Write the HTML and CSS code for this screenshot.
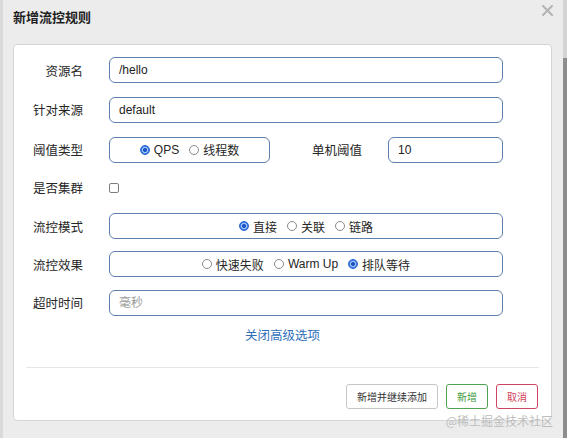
FILE: index.html
```html
<!DOCTYPE html>
<html lang="zh-CN">
<head>
<meta charset="utf-8">
<title>新增流控规则</title>
<link rel="stylesheet" href="styles.css">
</head>
<body>
<div class="page">
  <header class="header">
    <h1 class="title">新增流控规则</h1>
    <button class="close" type="button" aria-label="关闭">
      <svg width="11" height="11" viewBox="0 0 11 11"><path d="M1 1 L10 10 M10 1 L1 10" stroke="#b3b3b3" stroke-width="2" stroke-linecap="round"/></svg>
    </button>
  </header>
  <div class="card">
    <form class="form">
      <div class="row row-loose">
        <label class="label">资源名</label>
        <input class="field" type="text" value="/hello">
      </div>
      <div class="row row-loose">
        <label class="label">针对来源</label>
        <input class="field" type="text" value="default">
      </div>
      <div class="row">
        <label class="label">阈值类型</label>
        <div class="field choice box-short">
          <label class="option"><input type="radio" name="grade" checked><span>QPS</span></label>
          <label class="option"><input type="radio" name="grade"><span>线程数</span></label>
        </div>
        <label class="label label-inline">单机阈值</label>
        <input class="field field-short" type="text" value="10">
      </div>
      <div class="row">
        <label class="label">是否集群</label>
        <input class="check" type="checkbox">
      </div>
      <div class="row">
        <label class="label">流控模式</label>
        <div class="field choice">
          <label class="option"><input type="radio" name="mode" checked><span>直接</span></label>
          <label class="option"><input type="radio" name="mode"><span>关联</span></label>
          <label class="option"><input type="radio" name="mode"><span>链路</span></label>
        </div>
      </div>
      <div class="row">
        <label class="label">流控效果</label>
        <div class="field choice">
          <label class="option"><input type="radio" name="effect"><span>快速失败</span></label>
          <label class="option"><input type="radio" name="effect"><span>Warm Up</span></label>
          <label class="option"><input type="radio" name="effect" checked><span>排队等待</span></label>
        </div>
      </div>
      <div class="row">
        <label class="label">超时时间</label>
        <input class="field" type="text" placeholder="毫秒">
      </div>
    </form>
    <div class="toggle"><a href="#">关闭高级选项</a></div>
    <hr class="divider">
    <div class="footer">
      <button class="btn" type="button">新增并继续添加</button>
      <button class="btn btn-success" type="button">新增</button>
      <button class="btn btn-danger" type="button">取消</button>
    </div>
  </div>
  <div class="watermark">@稀土掘金技术社区</div>
</div>
</body>
</html>
```
FILE: styles.css
```css
* { box-sizing: border-box; }
html, body { margin: 0; }
body {
  width: 567px;
  height: 438px;
  overflow: hidden;
  font-family: "Liberation Sans", "Noto Sans CJK SC", sans-serif;
  color: #333;
  background:
    linear-gradient(#d4d4d4, #d4d4d4) right 0 top 0 / 4px 58px no-repeat,
    linear-gradient(#8d8d8d, #8d8d8d) right 0 top 58px / 4px 380px no-repeat,
    linear-gradient(to right, #dadada 0 3px, #ececec 3px);
}
.page { position: relative; height: 438px; }

.header {
  display: flex;
  justify-content: space-between;
  align-items: flex-start;
  height: 44px;
  padding: 10px 14px 0 13px;
}
.title {
  margin: 0;
  font-size: 13px;
  line-height: 15px;
  font-weight: bold;
  color: #1f1f1f;
}
.close {
  margin-top: -5px;
  padding: 0;
  width: 11px;
  height: 11px;
  border: 0;
  background: none;
  display: block;
}
.close svg { display: block; }

.card {
  margin-left: 13px;
  width: 539px;
  background: #fff;
  border: 1px solid #d5d5d5;
  border-radius: 4px;
  padding: 12px 0 11px;
}
.form {
  display: flex;
  flex-direction: column;
  gap: 12.3px;
  padding-right: 48px;
}
.row {
  display: flex;
  align-items: center;
  gap: 26px;
  height: 26px;
}
.row-loose { margin-bottom: 1.5px; }
.label {
  width: 69px;
  flex: none;
  text-align: right;
  font-size: 12.5px;
  color: #262626;
}
.field {
  flex: 1;
  min-width: 0;
  height: 26px;
  border: 1px solid #5f80ab;
  border-radius: 6px;
  padding: 0 9px;
  font-family: inherit;
  font-size: 12px;
  color: #222;
  background: #fff;
  outline: none;
}
.field::placeholder { color: #9a9a9a; }
.choice {
  display: flex;
  align-items: center;
  justify-content: center;
  gap: 10px;
}
.box-short { flex: none; width: 161px; }
.label-inline { flex: 1; width: auto; }
.field-short { flex: none; width: 115px; }

.option {
  display: inline-flex;
  align-items: center;
  gap: 4px;
  font-size: 12px;
  color: #262626;
}
.option input {
  appearance: none;
  -webkit-appearance: none;
  margin: 0;
  width: 10px;
  height: 10px;
  border: 1px solid #8a8a8a;
  border-radius: 50%;
  background: #fff;
}
.option input:checked {
  border-color: #2a62c9;
  background: radial-gradient(circle, #1b56c4 0 1.8px, #a9c6f5 2.3px 2.8px, #3b7ef0 3.3px);
}
.check {
  appearance: none;
  -webkit-appearance: none;
  margin: 0;
  width: 10px;
  height: 10px;
  border: 1px solid #7d7d7d;
  border-radius: 2px;
  background: #fff;
}

.toggle {
  margin-top: 11.7px;
  text-align: center;
  font-size: 12.5px;
  line-height: 18px;
}
.toggle a { color: #2f6fba; text-decoration: none; }

.divider {
  margin: 21.5px 12px 0;
  border: 0;
  border-top: 1px solid #e6e6e6;
  height: 0;
}
.footer {
  display: flex;
  justify-content: flex-end;
  gap: 8px;
  margin-top: 16px;
  padding-right: 13px;
}
.btn {
  height: 25px;
  padding: 0 10px;
  font-family: inherit;
  font-size: 10px;
  color: #333;
  background: #fff;
  border: 1px solid #c6c6c6;
  border-radius: 3px;
}
.btn-success { border-color: #4fa34f; color: #3d9a3d; }
.btn-danger { border-color: #cf4461; color: #d23f5b; }

.watermark {
  position: absolute;
  right: 14px;
  top: 413px;
  font-size: 12px;
  line-height: 15px;
  color: #bdbdbd;
  font-family: "Noto Sans CJK SC", sans-serif;
}
```
